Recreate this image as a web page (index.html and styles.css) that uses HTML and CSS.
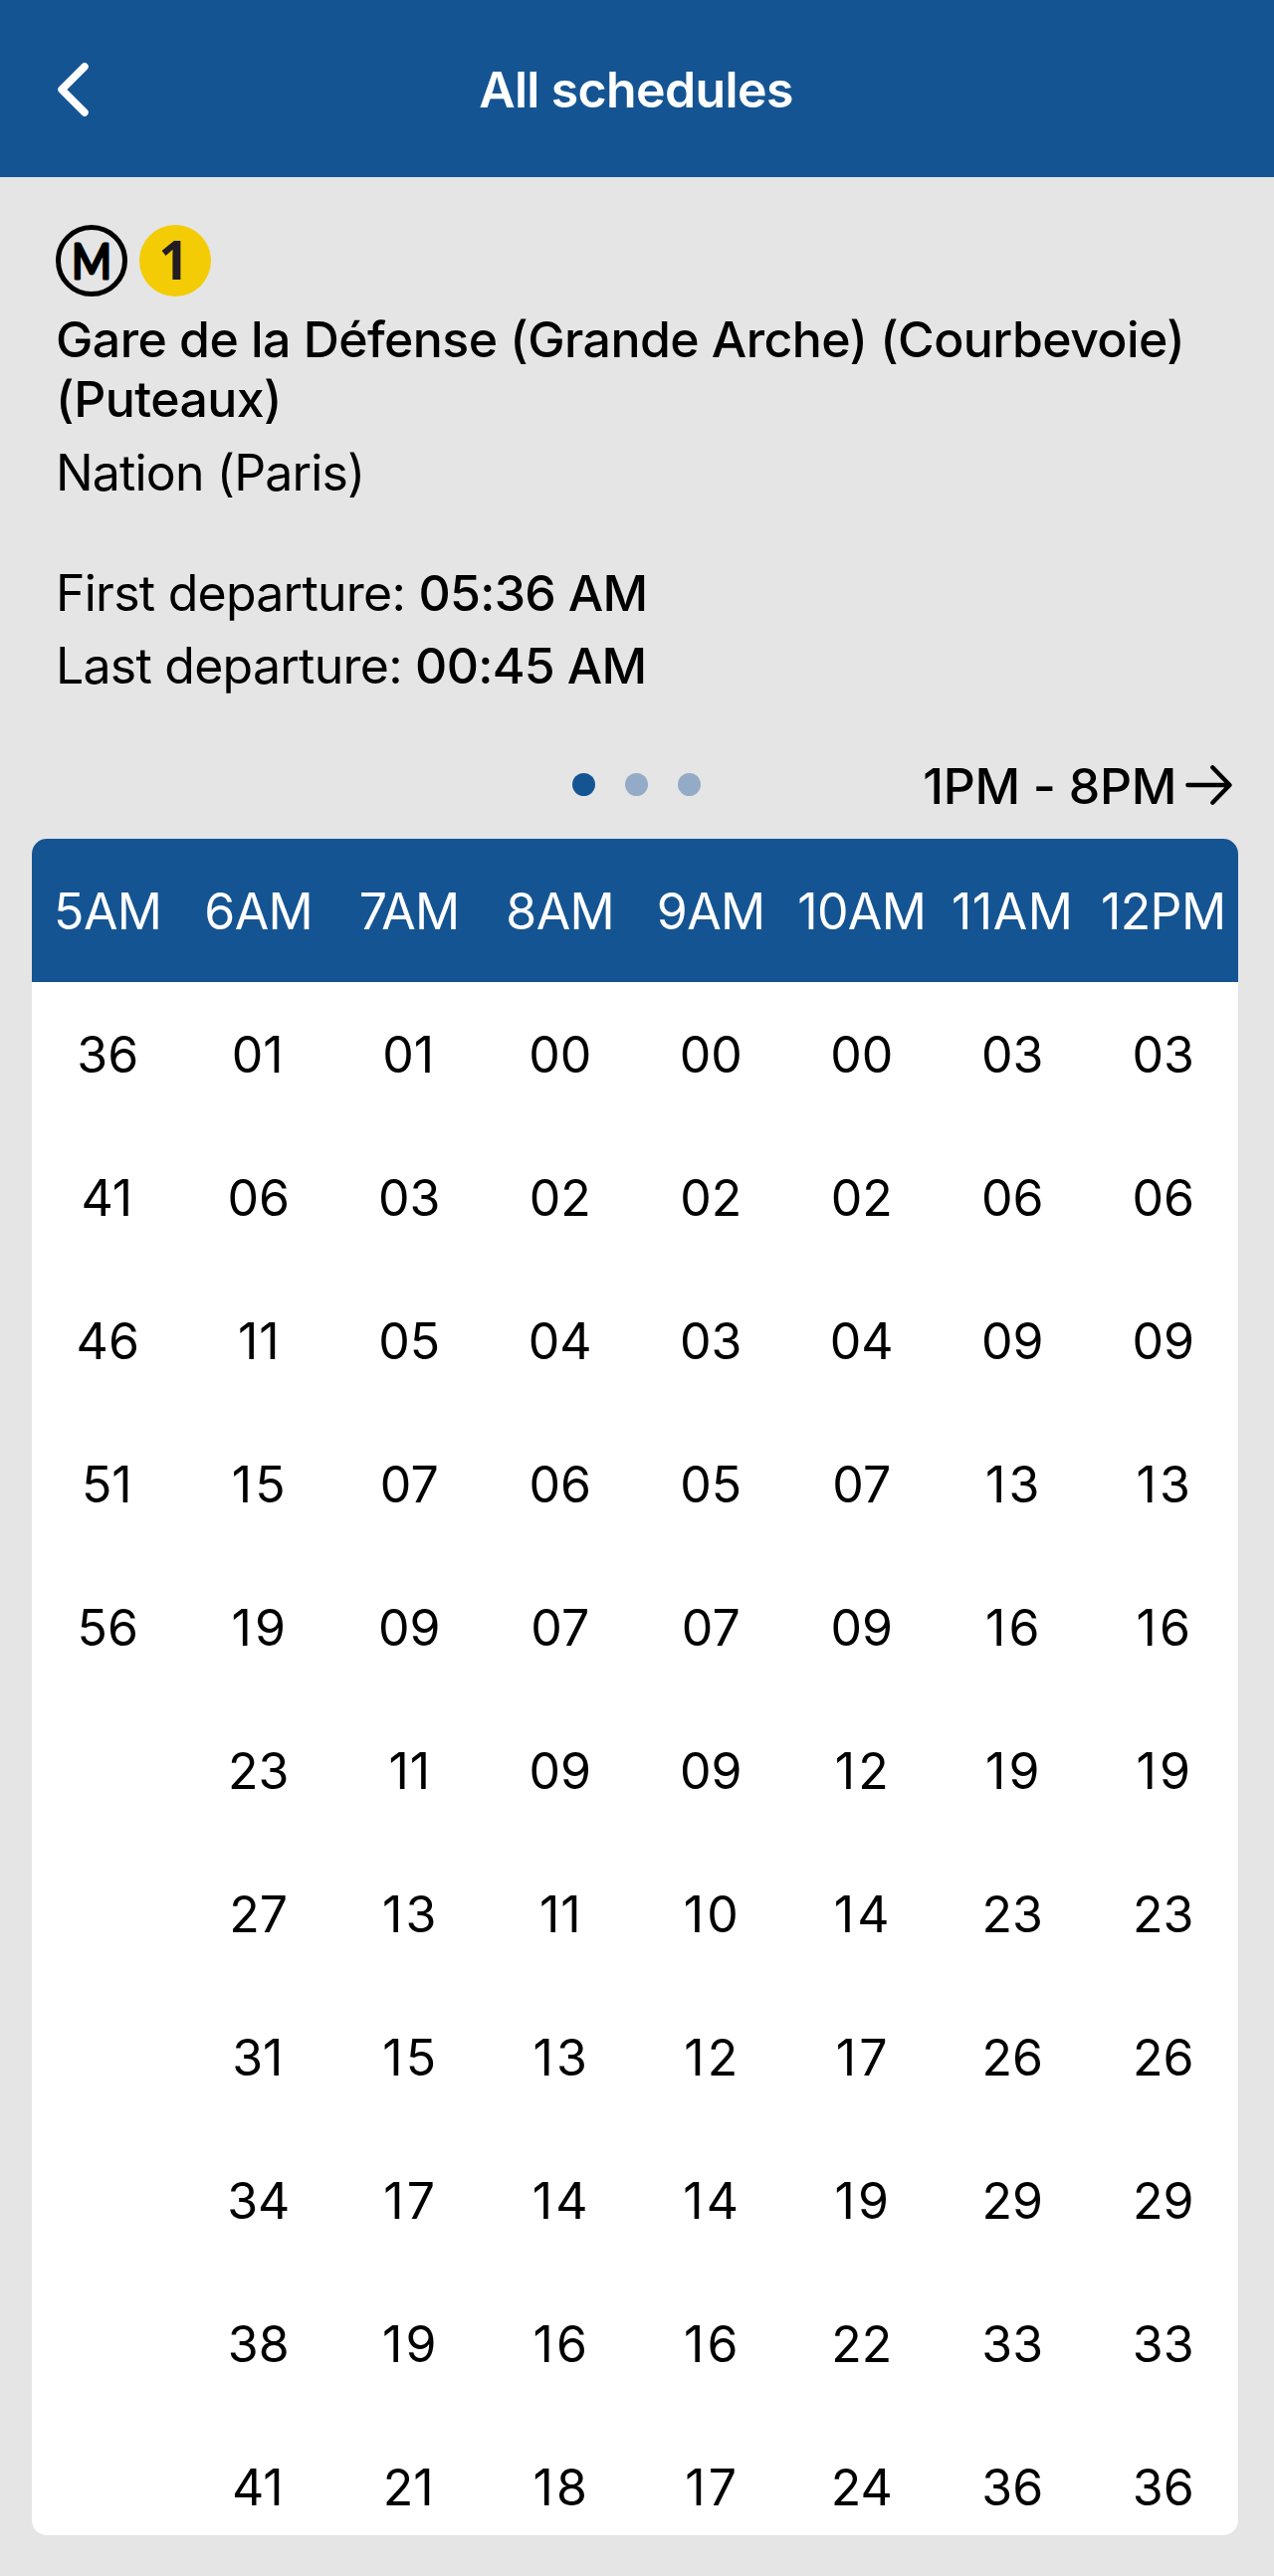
FILE: index.html
```html
<!DOCTYPE html>
<html lang="en">
<head>
<meta charset="utf-8">
<title>All schedules</title>
<link rel="stylesheet" href="styles.css">
</head>
<body>
<header class="topbar">
  <svg class="back" width="40" height="60" viewBox="0 0 40 60" aria-label="Back"><path d="M33 7 10 30 33 53"/></svg>
  <h1 class="topbar-title">All schedules</h1>
</header>
<main>
  <section class="info">
    <div class="badges">
      <svg class="badge" width="72" height="72" viewBox="0 0 72 72"><circle class="metro-ring" cx="36" cy="36" r="33.5"/><text class="metro-letter" transform="translate(36 53.8) scale(.88 1)" text-anchor="middle">M</text></svg>
      <svg class="badge" width="72" height="72" viewBox="0 0 72 72"><circle class="line-disc" cx="36" cy="36" r="36"/><text class="line-number" x="34.7" y="55" text-anchor="middle">1</text></svg>
    </div>
    <h2 class="stop">Gare de la Défense (Grande Arche) (Courbevoie) (Puteaux)</h2>
    <p class="direction">Nation (Paris)</p>
    <p class="departure first">First departure: <strong>05:36 AM</strong></p>
    <p class="departure">Last departure: <strong>00:45 AM</strong></p>
  </section>
  <nav class="pager">
    <div class="dots"><i class="dot active"></i><i class="dot"></i><i class="dot"></i></div>
    <a class="next"><span>1PM - 8PM</span><svg width="47" height="44" viewBox="0 0 47 44"><path d="M2.3 22H44M27.3 4.3 44.5 22 27.3 39.7"/></svg></a>
  </nav>
  <div class="card">
    <table class="times">
      <thead><tr><th>5AM</th><th>6AM</th><th>7AM</th><th>8AM</th><th>9AM</th><th>10AM</th><th class="h11">11AM</th><th>12PM</th></tr></thead>
      <tbody>
        <tr><td>36</td><td class="one">01</td><td class="one">01</td><td>00</td><td>00</td><td>00</td><td>03</td><td>03</td></tr>
        <tr><td class="one">41</td><td>06</td><td>03</td><td>02</td><td>02</td><td>02</td><td>06</td><td>06</td></tr>
        <tr><td>46</td><td class="ee">11</td><td>05</td><td>04</td><td>03</td><td>04</td><td>09</td><td>09</td></tr>
        <tr><td class="one">51</td><td class="teen">15</td><td>07</td><td>06</td><td>05</td><td>07</td><td class="teen">13</td><td class="teen">13</td></tr>
        <tr><td>56</td><td class="teen">19</td><td>09</td><td>07</td><td>07</td><td>09</td><td class="teen">16</td><td class="teen">16</td></tr>
        <tr><td></td><td>23</td><td class="ee">11</td><td>09</td><td>09</td><td class="teen">12</td><td class="teen">19</td><td class="teen">19</td></tr>
        <tr><td></td><td>27</td><td class="teen">13</td><td class="ee">11</td><td class="teen">10</td><td class="teen">14</td><td>23</td><td>23</td></tr>
        <tr><td></td><td class="one">31</td><td class="teen">15</td><td class="teen">13</td><td class="teen">12</td><td class="teen">17</td><td>26</td><td>26</td></tr>
        <tr><td></td><td>34</td><td class="teen">17</td><td class="teen">14</td><td class="teen">14</td><td class="teen">19</td><td>29</td><td>29</td></tr>
        <tr><td></td><td>38</td><td class="teen">19</td><td class="teen">16</td><td class="teen">16</td><td>22</td><td>33</td><td>33</td></tr>
        <tr><td></td><td class="one">41</td><td class="one">21</td><td class="teen">18</td><td class="teen">17</td><td>24</td><td>36</td><td>36</td></tr>
      </tbody>
    </table>
  </div>
</main>
</body>
</html>
```
FILE: styles.css
```css
* { box-sizing: border-box; }
body {
  margin: 0;
  height: 2589px;
  overflow: hidden;
  background: #e5e5e5;
  color: #000;
  font: 400 50px/60px Inter, sans-serif;
}
h1, h2, p { margin: 0; font-size: inherit; }

.topbar {
  display: grid;
  grid-template-columns: 1fr auto 1fr;
  align-items: center;
  height: 178px;
  padding: 2px 54px 0 52px;
  background: #155492;
  color: #fff;
}
.back { fill: none; stroke: #fff; stroke-width: 7.5; stroke-linecap: round; stroke-linejoin: round; }
.topbar-title { font-weight: 600; letter-spacing: -0.63px; }

.info { padding: 48px 56px 0; }
.badges { display: flex; gap: 12px; margin-bottom: 13px; }
.badge { overflow: visible; }
.metro-ring { fill: none; stroke: #000; stroke-width: 5; }
.metro-letter {
  font: 400 49px/1 Lato, sans-serif;
  stroke: #000;
  stroke-width: 3;
  stroke-linejoin: round;
}
.line-disc { fill: #f3cc06; }
.line-number { font: 700 53px/1 "Noto Sans", sans-serif; fill: #231c24; }
.stop { margin-right: -20px; font-weight: 500; letter-spacing: -0.56px; }
.direction { margin-top: 14px; letter-spacing: -0.86px; }
.departure { margin-top: 13px; letter-spacing: -0.76px; }
.departure.first { margin-top: 61px; }
.departure strong { font-weight: 500; letter-spacing: -0.7px; }

.pager {
  display: grid;
  grid-template-columns: 1fr auto 1fr;
  align-items: center;
  margin-top: 61px;
  padding: 0 42px 0 40px;
}
.dots { grid-column: 2; display: flex; gap: 30px; padding-bottom: 3px; }
.dot { width: 23px; height: 23px; border-radius: 50%; background: #93abc6; }
.dot.active { background: #155492; }
.next {
  display: flex;
  align-items: center;
  justify-content: flex-end;
  gap: 9px;
  font-weight: 500;
  letter-spacing: -0.3px;
  white-space: nowrap;
}
.next svg { margin-top: -2px; fill: none; stroke: #000; stroke-width: 4.3; stroke-linecap: round; stroke-linejoin: round; }

.card {
  height: 1705px;
  margin: 23px 36px 0 32px;
  border-radius: 15px;
  overflow: hidden;
  background: #fff;
}
.times { width: 100%; table-layout: fixed; border-collapse: collapse; text-align: center; }
.times th, .times td { height: 144px; padding: 2px 0 0 1px; }
.times th { background: #155492; color: #fff; font-weight: 400; letter-spacing: -0.6px; }
.times .h11 { letter-spacing: 0.6px; }
/* A leading "1" is set a little looser; the indent keeps the pair centred */
.teen { letter-spacing: 3.2px; text-indent: 3.2px; }
.ee { letter-spacing: 1px; text-indent: 1px; }
.one { text-indent: -2px; }
```
